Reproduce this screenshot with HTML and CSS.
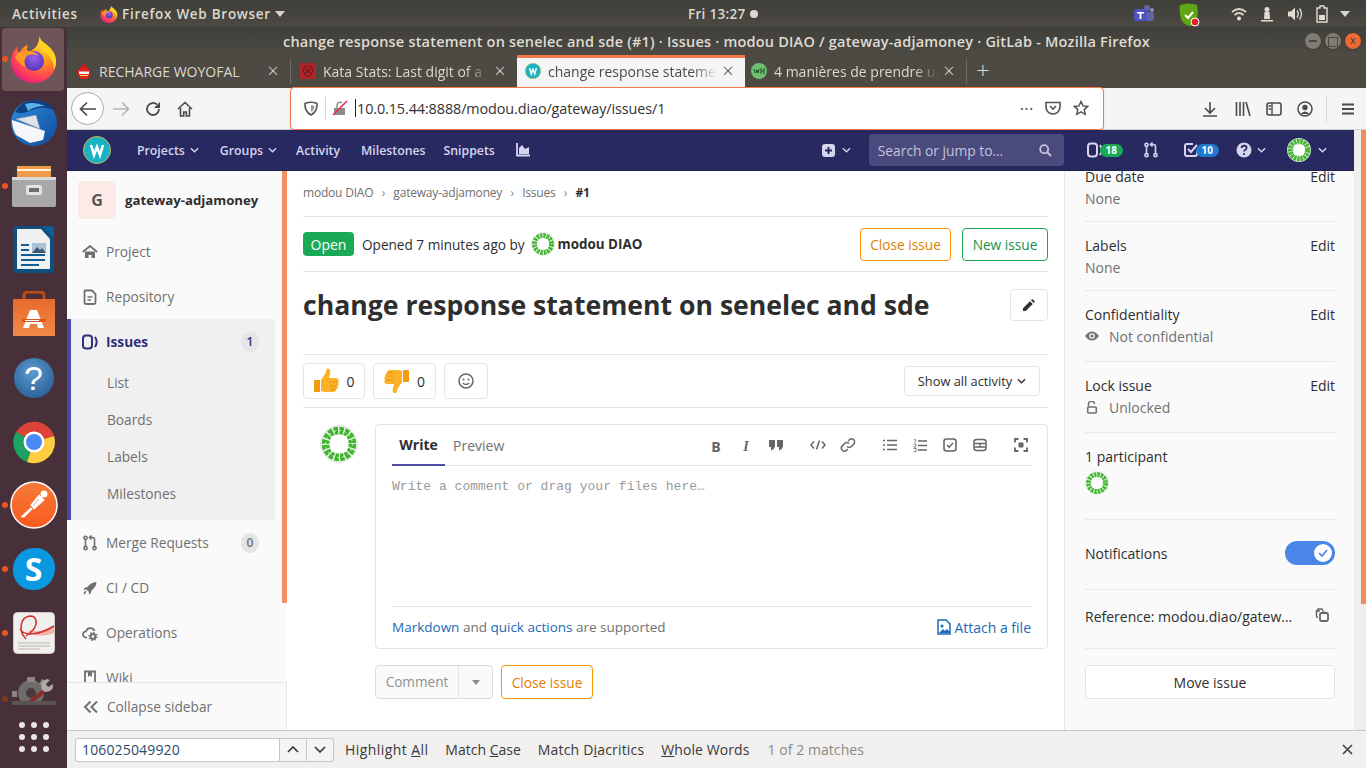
FILE: index.html
```html
<!DOCTYPE html>
<html lang="en">
<head>
<meta charset="utf-8">
<title>change response statement on senelec and sde (#1)</title>
<link rel="stylesheet" href="styles.css">
</head>
<body>
<svg class="defs" width="0" height="0" aria-hidden="true">
  <defs>
    <radialGradient id="ffBase" cx="0.72" cy="0.15" r="1">
      <stop offset="0" stop-color="#ffe226"/><stop offset="0.45" stop-color="#ff8a1f"/><stop offset="0.75" stop-color="#ff3d5a"/><stop offset="1" stop-color="#d5148f"/>
    </radialGradient>
    <radialGradient id="ffCore" cx="0.5" cy="0.35" r="0.7">
      <stop offset="0" stop-color="#9c5ff0"/><stop offset="1" stop-color="#4a34b4"/>
    </radialGradient>
    <linearGradient id="tbBlue" x1="0" y1="0" x2="1" y2="1">
      <stop offset="0" stop-color="#2a8fe0"/><stop offset="1" stop-color="#114a9c"/>
    </linearGradient>
    <linearGradient id="bagG" x1="0" y1="0" x2="0" y2="1">
      <stop offset="0" stop-color="#e96a2a"/><stop offset="1" stop-color="#f08a48"/>
    </linearGradient>
    <linearGradient id="pmG" x1="0" y1="0" x2="0" y2="1">
      <stop offset="0" stop-color="#f47a3a"/><stop offset="1" stop-color="#fb5a1e"/>
    </linearGradient>
    <symbol id="firefox" viewBox="0 0 48 48">
      <path fill="url(#ffBase)" d="M29 1c1 4 4 6 8 9 6 5 9 10 9 17 0 12-10 21-22 21S1 39 1 27c0-6 2-11 6-15 0 3 1 5 3 6 1-4 4-7 8-8-2 4-1 6 1 7 6-3 11-8 10-16z"/>
      <path fill="#ffd21f" d="M29 1c1 4 4 6 8 9 6 5 9 10 9 17 0 3-1 6-2 8 0-8-4-15-11-19-1-5 0-10-4-15z"/>
      <circle cx="24" cy="26" r="10" fill="url(#ffCore)"/>
      <path fill="#ff9a26" d="M5 22c3-5 8-7 13-6 5 0 9 2 11 5-4-2-9-2-12 0-3 3-3 7-1 11-4-1-8-5-11-10z"/>
    </symbol>
    <symbol id="identicon" viewBox="0 0 38 38">
      <circle cx="19" cy="19" r="18.5" fill="#f2f2f2" stroke="#e4e4e4"/>
      <circle cx="19" cy="19" r="13.5" fill="none" stroke="#3fb52e" stroke-width="7.500" stroke-dasharray="4 1.300"/>
      <circle cx="19" cy="19" r="13.5" fill="none" stroke="#fff" stroke-width="1" stroke-dasharray="1.500 3.800"/>
      <rect x="10.500" y="10.500" width="17" height="17" rx="4" fill="#fff"/>
    </symbol>
    <symbol id="wlogo" viewBox="0 0 28 28">
      <circle cx="14" cy="14" r="13.500" fill="#1ab3c4" stroke="#c8b65a"/>
      <path d="M8 9l3 10 3-8 3 8 3-10" fill="none" stroke="#fff" stroke-width="2.600"/>
    </symbol>
    <symbol id="ic-issues" viewBox="0 0 16 16">
      <rect x="1" y="1.500" width="9" height="13" rx="3" fill="none" stroke="currentColor" stroke-width="2"/>
      <path d="M13 3c2 3 2 7 0 10" fill="none" stroke="currentColor" stroke-width="2"/>
    </symbol>
    <symbol id="ic-mr" viewBox="0 0 16 16">
      <g fill="none" stroke="currentColor" stroke-width="1.600">
        <circle cx="3.500" cy="2.800" r="1.600"/><circle cx="3.500" cy="13.200" r="1.600"/><circle cx="12.500" cy="13.200" r="1.600"/>
        <path d="M3.500 4.500v7M12.500 11.500V4.500c0-1-.6-2-2-2H8M9.500 0.500l-2 2 2 2"/>
      </g>
    </symbol>
    <symbol id="ic-todo" viewBox="0 0 16 16">
      <path d="M14 8v4a2 2 0 0 1-2 2H4a2 2 0 0 1-2-2V4a2 2 0 0 1 2-2h6" fill="none" stroke="currentColor" stroke-width="2"/>
      <path d="M5 7l3 3 6-7" fill="none" stroke="currentColor" stroke-width="2"/>
    </symbol>
    <symbol id="ic-chev" viewBox="0 0 10 6">
      <path d="M1 1l4 4 4-4" fill="none" stroke="currentColor" stroke-width="1.500"/>
    </symbol>
    <symbol id="identicon-nav" viewBox="0 0 38 38">
      <circle cx="19" cy="19" r="19" fill="#eaeaea"/>
      <circle cx="19" cy="19" r="14" fill="none" stroke="#43b52f" stroke-width="8" stroke-dasharray="4 1.200"/>
      <rect x="11" y="11" width="16" height="16" rx="2" fill="#fff"/>
    </symbol>
    <symbol id="thumb" viewBox="0 0 26 26">
      <path d="M2 12h5v12H2a1 1 0 0 1-1-1V13a1 1 0 0 1 1-1z" fill="#f39b0b"/>
      <path d="M8 12l4-6c1-2 1-4 2-5 3-1 4 2 3 5l-1 4h7c3 0 3 3 2 4 1 1 1 3-.5 4 .5 1.500 0 3-1.500 3.500 0 1.500-1 2.500-3 2.500H12c-2 0-3-1-4-1z" fill="#fcb127"/>
      <path d="M17 14h7M17 18h6.500M17 21.500h5" stroke="#e8930a" stroke-width="1"/>
    </symbol>
  </defs>
</svg>

<header class="topbar">
  <div class="tb-left">
    <span class="tb-activities">Activities</span>
    <svg class="tb-ff" width="18" height="18"><use href="#firefox"/></svg>
    <span class="tb-app">Firefox Web Browser</span>
    <span class="caret"></span>
  </div>
  <div class="tb-center"><span>Fri 13:27</span><span class="tb-dot"></span></div>
  <div class="tb-right">
    <svg class="tray tray-teams" width="22" height="20" viewBox="0 0 22 20"><circle cx="14" cy="4" r="3" fill="#6264a7"/><circle cx="19" cy="6" r="2" fill="#8b8cc7"/><rect x="12" y="8" width="9" height="9" rx="3" fill="#6264a7"/><rect x="1" y="5" width="13" height="12" rx="1.500" fill="#4b53bc"/><path d="M4 8h7v1.500H8.400V15H6.600V9.500H4z" fill="#fff"/></svg>
    <svg class="tray tray-shield" width="22" height="24" viewBox="0 0 22 24"><path d="M2 2q9-3 17 0 2 10-1 17-3 4-7 4-6-2-8-7-2-7-1-14z" fill="#5fa616"/><path d="M7 12l3 3 5-6" fill="none" stroke="#fff" stroke-width="2"/><circle cx="17" cy="19" r="4" fill="#e8202a" stroke="#fff"/></svg>
    <svg class="tray tray-wifi" width="16" height="14" viewBox="0 0 16 14"><path d="M1 5q7-6 14 0M3.500 8q4.500-4 9 0" fill="none" stroke="#d8d5cc" stroke-width="1.700"/><circle cx="8" cy="11.500" r="2" fill="#e8e5dc"/></svg>
    <svg class="tray tray-lock" width="14" height="16" viewBox="0 0 14 16"><circle cx="7" cy="3.500" r="2.500" fill="#e0ddd4"/><path d="M4.500 6h5l.5 7H4zM1 14h12v1.500H1z" fill="#e0ddd4"/></svg>
    <svg class="tray tray-vol" width="16" height="14" viewBox="0 0 16 14"><path d="M1 4.500h3l4-4v13l-4-4H1z" fill="#e0ddd4"/><path d="M10 3.500q2.500 3.500 0 7M12.500 1.500q4 5.500 0 11" fill="none" stroke="#d8d5cc" stroke-width="1.400"/></svg>
    <svg class="tray tray-bat" width="12" height="18" viewBox="0 0 12 18"><path d="M4 1h4v2h3v14H1V3h3z" fill="none" stroke="#e0ddd4" stroke-width="1.400"/><path d="M3 10h6v5H3z" fill="#e0ddd4"/></svg>
    <span class="caret tray-caret"></span>
  </div>
</header>

<div class="desktop">
  <nav class="dock">
    <div class="dock-item dock-active"><span class="dot"></span>
      <svg width="48" height="48"><use href="#firefox"/></svg></div>
    <div class="dock-item">
      <svg width="50" height="50" viewBox="0 0 50 50"><circle cx="25" cy="25" r="23" fill="url(#tbBlue)"/><path d="M6 14Q14 0 30 2q10 2 15 10-12-5-22 0-9 5-17 2z" fill="#10407f"/><path d="M16 6q10-3 20 2-10 0-17 5z" fill="#5ab0ec"/><path d="M3 22l33 11-2 9-13 3-14-8q-4-7-4-15z" fill="#f6f6fa"/><path d="M7 21l20-4 4 14z" fill="#e0e3ea" stroke="#8c96a8" stroke-width=".7"/></svg></div>
    <div class="dock-item"><span class="dot"></span>
      <svg width="44" height="44" viewBox="0 0 44 44"><path d="M2 0h40v14H2z" fill="#3f3a36"/><path d="M5 2h34v12H5z" fill="#ef9a4a"/><path d="M5 5h34v2H5z" fill="#fff3d8"/><path d="M0 13h44v28a2 2 0 0 1-2 2H2a2 2 0 0 1-2-2z" fill="#a8a8a8"/><path d="M0 13h44v3H0z" fill="#d8d8d8"/><rect x="14" y="21" width="16" height="10" rx="2" fill="#e2e2e2"/><rect x="17" y="24" width="10" height="4" fill="#6c6c6c"/></svg></div>
    <div class="dock-item">
      <svg width="42" height="50" viewBox="0 0 42 50"><path d="M3 1h26l12 12v32a3 3 0 0 1-3 3H3a3 3 0 0 1-3-3V4a3 3 0 0 1 3-3z" fill="#0e4f7e"/><path d="M4 4h24l9 10v30H4z" fill="#eef0f2"/><path d="M29 1h9a3 3 0 0 1 3 3v9z" fill="#0e5f96"/><path d="M8 19h8v2H8zM8 24h8v2H8zM8 29h24v2H8zM8 34h24v2H8zM8 39h18v2H8z" fill="#0e5f96"/><rect x="19" y="18" width="14" height="10" fill="#a9c2d8"/><path d="M19 28l5-6 3 3 2-2 4 5z" fill="#44576a"/></svg></div>
    <div class="dock-item">
      <svg width="44" height="46" viewBox="0 0 44 46"><path d="M12 10V5q0-4 4-4h12q4 0 4 4v5" fill="none" stroke="#bd4a12" stroke-width="3"/><path d="M1 8h42v37H1z" fill="url(#bagG)"/><path d="M18 19h7l7 18h-6l-1-4h-7l-1 4h-6z" fill="#fff"/><path d="M10 28h24v3H10z" fill="#e2561c"/><path d="M13 29h14v1H13z" fill="#fff"/></svg></div>
    <div class="dock-item">
      <div class="help-ball">?</div></div>
    <div class="dock-item">
      <svg width="46" height="46" viewBox="0 0 46 46"><path d="M23 23 5 13A21 21 0 0 1 43 17z" fill="#dc4437"/><path d="M23 23 5 13a21 21 0 0 0 11 30z" fill="#1ea362"/><path d="M23 23 16 43A21 21 0 0 0 43 17z" fill="#ffcd40"/><circle cx="23" cy="23" r="10.500" fill="#fff"/><circle cx="23" cy="23" r="8" fill="#4a8af4"/></svg></div>
    <div class="dock-item"><span class="dot"></span>
      <svg width="48" height="48" viewBox="0 0 48 48"><circle cx="24" cy="24" r="23" fill="url(#pmG)" stroke="#fff" stroke-width="1.500"/><path d="M10 36l11-10 2 2-9 9zM20 24l9-11 6 6-11 10zM29 18l-6 7" fill="#fff" stroke="#f0652a" stroke-width=".6"/><circle cx="34" cy="13" r="3.500" fill="#fff"/></svg></div>
    <div class="dock-item"><span class="dot"></span>
      <div class="skype"><span>S</span></div></div>
    <div class="dock-item"><span class="dot"></span>
      <svg width="42" height="42" viewBox="0 0 42 42"><rect x=".5" y=".5" width="41" height="41" rx="4" fill="#f1efec" stroke="#cfcac4"/><path d="M15 18q10 4 26-4v7q-14 5-24 0z" fill="#efb1a8"/><path d="M13 27C5 19 7 5 17 4c7 0 8 8 3 14-2 2-4 4-7 6M7 17c4 7 18 7 34-3" fill="none" stroke="#d42b2b" stroke-width="1.500"/><path d="M5 31h32M5 34h32M5 37h22" stroke="#b8b8b8"/></svg></div>
    <div class="dock-item dock-tools"><span class="dot dot-dim"></span>
      <svg width="44" height="28" viewBox="0 0 44 28"><circle cx="19" cy="16" r="13" fill="#6f6b69"/><circle cx="19" cy="16" r="5" fill="#4a3a40"/><path d="M15 0h8v5h-8zM0 14h5v6H0zM30 2l5 3-4 5-4-3z" fill="#8a8684"/><path d="M11 28l20-16 3 3-16 13z" fill="#8a2a2a"/><path d="M30 13q-3-9 5-11l3 1-4 4 2 3 5-3q1 8-8 8z" fill="#aeaaa8"/><path d="M0 24h44v4H0z" fill="#5a5355"/></svg></div>
    <div class="dock-item dock-grid">
      <span></span><span></span><span></span><span></span><span></span><span></span><span></span><span></span><span></span>
    </div>
  </nav>

  <div class="window">
    <div class="titlebar">
      <div class="tt-spacer"></div>
      <div class="tt-text">change response statement on senelec and sde (#1) · Issues · modou DIAO / gateway-adjamoney · GitLab - Mozilla Firefox</div>
      <div class="wm-buttons">
        <span class="wm wm-min"></span><span class="wm wm-max"></span><span class="wm wm-close">x</span>
      </div>
    </div>

    <div class="tabstrip">
      <div class="tab tab-1">
        <svg class="fav" width="16" height="16" viewBox="0 0 16 16"><circle cx="8" cy="10" r="6.500" fill="#e0201c"/><path d="M6 1.500h4l1 4H5z" fill="#d01a18"/><path d="M3 8.500h10v2.500H3z" fill="#fff"/><path d="M4 12.500h8" stroke="#ffd84a"/></svg>
        <span class="tab-label">RECHARGE WOYOFAL</span><span class="tab-x">×</span>
      </div>
      <div class="tab-sep"></div>
      <div class="tab tab-2">
        <svg class="fav" width="16" height="16" viewBox="0 0 16 16"><rect width="16" height="16" fill="#b1242a"/><path d="M5 3h6l2 5-3 5H6L3 8zM6 6l4 4M10 6l-4 4" fill="none" stroke="#6e1a1d" stroke-width="1.200"/></svg>
        <span class="tab-label tab-fade">Kata Stats: Last digit of a</span><span class="tab-x">×</span>
      </div>
      <div class="tab tab-active">
        <svg class="fav" width="16" height="16"><use href="#wlogo"/></svg>
        <span class="tab-label tab-fade">change response stateme</span><span class="tab-x">×</span>
      </div>
      <div class="tab tab-4">
        <svg class="fav" width="16" height="16" viewBox="0 0 16 16"><circle cx="8" cy="8" r="8" fill="#6fbf73"/><path d="M3 6l1.500 4L6 7l1 3 1-4M10 5v6M13 5v6M10 8h3" fill="none" stroke="#1f4a22" stroke-width="1"/></svg>
        <span class="tab-label tab-fade">4 manières de prendre ur</span><span class="tab-x">×</span>
      </div>
      <div class="tab-sep"></div>
      <span class="tab-plus">+</span>
    </div>

    <div class="toolbar">
      <div class="back-btn">
        <svg width="18" height="16" viewBox="0 0 18 16"><path d="M17 8H2M8 1.500 1.500 8 8 14.500" fill="none" stroke="#4a4a4a" stroke-width="1.700"/></svg>
      </div>
      <svg class="tool-fwd" width="18" height="16" viewBox="0 0 18 16"><path d="M1 8h15M10 1.500 16.500 8 10 14.500" fill="none" stroke="#b5b5b5" stroke-width="1.700"/></svg>
      <svg class="tool-reload" width="16" height="16" viewBox="0 0 16 16"><path d="M14 8a6 6 0 1 1-2-4.500" fill="none" stroke="#4a4a4a" stroke-width="1.800"/><path d="M15 1v6H9z" fill="#4a4a4a"/></svg>
      <svg class="tool-home" width="16" height="16" viewBox="0 0 16 16"><path d="M1 8l7-6.500L15 8M3.500 7v8h3.200v-4h2.600v4h3.200V7" fill="none" stroke="#4a4a4a" stroke-width="1.600"/></svg>
      <div class="urlbar">
        <svg class="u-shield" width="14" height="15" viewBox="0 0 14 15"><path d="M1 2.500q6-2.500 12 0 .5 8-6 11.500-6.500-3.500-6-11.500z" fill="none" stroke="#555" stroke-width="1.600"/><path d="M7 4v7q3.500-2 3.500-6z" fill="#999"/></svg>
        <span class="u-sep"></span>
        <svg class="u-lock" width="16" height="16" viewBox="0 0 16 16"><path d="M2 8h11v7H2z" fill="#8c8c8c"/><path d="M5 8V5a3 3 0 0 1 5-2" fill="none" stroke="#8c8c8c" stroke-width="1.500"/><path d="M1 15 15 1" stroke="#ea2a4f" stroke-width="1.600"/></svg>
        <span class="u-caret"></span>
        <span class="u-text">10.0.15.44:8888/modou.diao/gateway/issues/1</span>
        <span class="u-dots">•••</span>
        <svg class="u-pocket" width="16" height="16" viewBox="0 0 16 16"><path d="M1 2.500h14V7a7 7 0 0 1-14 0z" fill="none" stroke="#555" stroke-width="1.600"/><path d="M5 6l3 3 3-3" fill="none" stroke="#555" stroke-width="1.600"/></svg>
        <svg class="u-star" width="16" height="16" viewBox="0 0 16 16"><path d="M8 1.500l2 4.400 4.700.5-3.500 3.200 1 4.700L8 11.900l-4.200 2.400 1-4.700L1.300 6.400 6 5.900z" fill="none" stroke="#555" stroke-width="1.500"/></svg>
      </div>
      <svg class="t-dl" width="16" height="16" viewBox="0 0 16 16"><path d="M8 1v10M3 7l5 5 5-5M1 15h14" fill="none" stroke="#4a4a4a" stroke-width="1.600"/></svg>
      <svg class="t-lib" width="16" height="16" viewBox="0 0 16 16"><path d="M1.500 1v14M5 1v14M8.500 1v14M11 1l4 14" fill="none" stroke="#4a4a4a" stroke-width="1.600"/></svg>
      <svg class="t-side" width="16" height="16" viewBox="0 0 16 16"><rect x="1" y="2" width="14" height="12" rx="2" fill="none" stroke="#4a4a4a" stroke-width="1.600"/><path d="M6 2v12M2.500 5H5M2.500 8H5" stroke="#4a4a4a" stroke-width="1.400"/></svg>
      <svg class="t-acct" width="16" height="16" viewBox="0 0 16 16"><circle cx="8" cy="8" r="7" fill="none" stroke="#4a4a4a" stroke-width="1.500"/><circle cx="8" cy="6.500" r="2.700" fill="#4a4a4a"/><path d="M3.500 13q4.500-5 9 0" fill="#4a4a4a"/></svg>
      <span class="t-sep"></span>
      <svg class="t-menu" width="14" height="12" viewBox="0 0 14 12"><path d="M1 1.500h12M1 6h12M1 10.500h12" stroke="#4a4a4a" stroke-width="1.800"/></svg>
    </div>

    <div class="viewport">
      <div class="page">
        <div class="gl-nav">
          <svg class="gl-logo" width="28" height="28"><use href="#wlogo"/></svg>
          <span class="gl-link gl-projects">Projects<svg class="chev" width="9" height="6"><use href="#ic-chev"/></svg></span>
          <span class="gl-link gl-groups">Groups<svg class="chev" width="9" height="6"><use href="#ic-chev"/></svg></span>
          <span class="gl-link gl-activity">Activity</span>
          <span class="gl-link gl-miles">Milestones</span>
          <span class="gl-link gl-snip">Snippets</span>
          <svg class="gl-chart" width="14" height="14" viewBox="0 0 14 14"><path d="M1 0v12.500h13" fill="none" stroke="#d5d5ef" stroke-width="1.800"/><path d="M3 11V5l3-3 3 4 4-2v7z" fill="#d5d5ef"/></svg>
          <svg class="gl-plus" width="13" height="13" viewBox="0 0 13 13"><rect width="13" height="13" rx="3" fill="#d5d5ef"/><path d="M6.500 3v7M3 6.500h7" stroke="#292961" stroke-width="2"/></svg>
          <svg class="chev gl-plus-chev" width="9" height="6"><use href="#ic-chev"/></svg>
          <div class="gl-search"><span>Search or jump to…</span>
            <svg width="13" height="13" viewBox="0 0 13 13"><circle cx="5.200" cy="5.200" r="4" fill="none" stroke="#c3c3de" stroke-width="1.800"/><path d="M8 8l4 4" stroke="#c3c3de" stroke-width="2"/></svg></div>
          <span class="gl-count gl-count-issues"><svg width="16" height="16"><use href="#ic-issues"/></svg><b class="badge badge-green">18</b></span>
          <svg class="gl-mr" width="16" height="16"><use href="#ic-mr"/></svg>
          <span class="gl-count gl-count-todo"><svg width="16" height="16"><use href="#ic-todo"/></svg><b class="badge badge-blue">10</b></span>
          <svg class="gl-help" width="16" height="16" viewBox="0 0 16 16"><circle cx="8" cy="8" r="7.500" fill="#d5d5ef"/><path d="M5.500 6q.3-2.300 2.700-2.300 2.500.2 2.400 2.300-.1 1.300-1.500 2-1 .5-1 1.500" fill="none" stroke="#292961" stroke-width="1.800"/><circle cx="8.100" cy="12" r="1.100" fill="#292961"/></svg>
          <svg class="chev gl-help-chev" width="9" height="6"><use href="#ic-chev"/></svg>
          <svg class="gl-avatar" width="24" height="24"><use href="#identicon-nav"/></svg>
          <svg class="chev gl-av-chev" width="9" height="6"><use href="#ic-chev"/></svg>
        </div>

        <div class="gl-body">
          <aside class="side">
            <div class="side-scroll">
              <div class="side-list">
                <div class="side-head"><span class="side-g">G</span><span class="side-name">gateway-adjamoney</span></div>
                <div class="side-item">
                  <svg width="16" height="16" viewBox="0 0 16 16"><path d="M.8 8 8 2l7.200 6" fill="none" stroke="currentColor" stroke-width="1.800"/><path d="M3 7.500h10V14H9.500v-3h-3v3H3z" fill="currentColor"/></svg>
                  <span>Project</span></div>
                <div class="side-item">
                  <svg width="16" height="16" viewBox="0 0 16 16"><path d="M3 1.500h7l3.500 3.500v8.500a1.500 1.500 0 0 1-1.500 1.500H4a1.500 1.500 0 0 1-1.500-1.500V2z" fill="none" stroke="currentColor" stroke-width="1.800"/><path d="M5.500 8h5M5.500 11h3.500" stroke="currentColor" stroke-width="1.600"/></svg>
                  <span>Repository</span></div>
                <div class="side-group">
                  <div class="side-item side-current">
                    <svg width="16" height="16"><use href="#ic-issues"/></svg>
                    <span>Issues</span><b class="side-badge">1</b></div>
                  <div class="side-sub">List</div>
                  <div class="side-sub">Boards</div>
                  <div class="side-sub">Labels</div>
                  <div class="side-sub">Milestones</div>
                </div>
                <div class="side-item">
                  <svg width="16" height="16"><use href="#ic-mr"/></svg>
                  <span>Merge Requests</span><b class="side-badge">0</b></div>
                <div class="side-item">
                  <svg width="16" height="16" viewBox="0 0 16 16"><path d="M14.500 2q-6 .5-9 5L3 7.500 1.500 10l3-.5L7 12l-.5 2.500L9 13l.5-2.500q4.500-3 5-8.500z" fill="currentColor"/><path d="M2 14l2-3" stroke="currentColor" stroke-width="1.500"/></svg>
                  <span>CI / CD</span></div>
                <div class="side-item">
                  <svg width="16" height="16" viewBox="0 0 16 16"><path d="M5 12.500H4A3 3 0 0 1 4 6.500 4.500 4.500 0 0 1 12.500 6" fill="none" stroke="currentColor" stroke-width="1.700"/><circle cx="11" cy="11.500" r="2.400" fill="none" stroke="currentColor" stroke-width="2"/><circle cx="11" cy="11.500" r="4" fill="none" stroke="currentColor" stroke-width="1.300" stroke-dasharray="1.500 1.600"/></svg>
                  <span>Operations</span></div>
                <div class="side-item">
                  <svg width="16" height="16" viewBox="0 0 16 16"><path d="M3 1.500h10V15H3z" fill="none" stroke="currentColor" stroke-width="1.800"/><path d="M6 1.500V7l2-1.500L10 7V1.500z" fill="currentColor"/></svg>
                  <span>Wiki</span></div>
              </div>
              <div class="side-track"><div class="side-thumb"></div></div>
            </div>
            <div class="side-collapse">
              <svg width="16" height="14" viewBox="0 0 16 14"><path d="M7.500 1.500 2 7l5.500 5.500M14 1.500 8.500 7l5.500 5.500" fill="none" stroke="currentColor" stroke-width="2"/></svg>
              <span>Collapse sidebar</span>
            </div>
          </aside>

          <main class="content">
            <div class="crumbs">
              <span>modou DIAO</span><i class="sepch">›</i>
              <span>gateway-adjamoney</span><i class="sepch">›</i>
              <span>Issues</span><i class="sepch">›</i>
              <b>#1</b>
            </div>
            <div class="status-row">
              <span class="open-badge">Open</span>
              <span class="opened">Opened 7 minutes ago by</span>
              <svg class="status-av" width="24" height="24"><use href="#identicon"/></svg>
              <b class="author">modou DIAO</b>
              <span class="btn btn-warn btn-close-top">Close issue</span>
              <span class="btn btn-ok">New issue</span>
            </div>
            <div class="title-row">
              <h1>change response statement on senelec and sde</h1>
              <span class="btn btn-edit"><svg width="12" height="12" viewBox="0 0 12 12"><path d="M0 12V9.200L7 2.200 9.800 5 2.800 12zM8 1.200 9 .2q.3-.2.6 0l2.200 2.200q.2.3 0 .6l-1 1z" fill="#303030"/></svg></span>
            </div>
            <div class="award-row">
              <span class="award award-up"><svg width="26" height="26"><use href="#thumb"/></svg><span>0</span></span>
              <span class="award award-down"><svg class="flip" width="26" height="26"><use href="#thumb"/></svg><span>0</span></span>
              <span class="award award-smile"><svg width="16" height="16" viewBox="0 0 16 16"><circle cx="8" cy="8" r="7" fill="none" stroke="#666" stroke-width="1.500"/><circle cx="5.500" cy="6.500" r="1" fill="#666"/><circle cx="10.500" cy="6.500" r="1" fill="#666"/><path d="M4.800 10q3.200 2.800 6.400 0" fill="none" stroke="#666" stroke-width="1.300"/></svg></span>
              <span class="activity-btn">Show all activity<svg class="chev" width="9" height="6"><use href="#ic-chev"/></svg></span>
            </div>
            <div class="comment-row">
              <svg class="comment-av" width="38" height="38"><use href="#identicon"/></svg>
              <div class="comment-col">
                <div class="card">
                  <div class="card-head">
                    <span class="tab-write">Write</span><span class="tab-preview">Preview</span>
                    <div class="md-tools">
                      <div class="md-group">
                        <span class="md md-b">B</span><span class="md md-i">I</span>
                        <svg width="16" height="12" viewBox="0 0 16 12"><path d="M1 1h6v6q-.5 3.500-4 4.500V8H1zM9 1h6v6q-.5 3.500-4 4.500V8H9z" fill="#666"/></svg>
                      </div>
                      <div class="md-group">
                        <svg width="16" height="10" viewBox="0 0 16 10"><path d="M4 1.500 1 5l3 3.500M12 1.500 15 5l-3 3.500M9.500 .5l-3 9" fill="none" stroke="#666" stroke-width="1.500"/></svg>
                        <svg width="16" height="16" viewBox="0 0 16 16"><path d="M7 9.500a3 3 0 0 0 4.300 0l2.400-2.400a3 3 0 0 0-4.300-4.300L8.200 4M9 6.500a3 3 0 0 0-4.300 0L2.300 8.900a3 3 0 0 0 4.300 4.300L7.800 12" fill="none" stroke="#666" stroke-width="1.500"/></svg>
                      </div>
                      <div class="md-group">
                        <svg width="14" height="12" viewBox="0 0 14 12"><path d="M4 1.500h10M4 6h10M4 10.500h10" stroke="#666" stroke-width="1.400"/><path d="M0 1.500h2M0 6h2M0 10.500h2" stroke="#666" stroke-width="1.600"/></svg>
                        <svg class="md-ol" width="14" height="13" viewBox="0 0 14 13"><path d="M5 2h9M5 6.500h9M5 11h9" stroke="#666" stroke-width="1.400"/><path d="M1 .5h1.300v3M.5 5h2.500v1.500L.8 8h2.400M.6 9.500h2.500v3H.6" fill="none" stroke="#666" stroke-width=".8"/></svg>
                        <svg width="14" height="14" viewBox="0 0 14 14"><rect x="1" y="1" width="12" height="12" rx="2.500" fill="none" stroke="#666" stroke-width="1.600"/><path d="M4 7l2.200 2.200L10 5" fill="none" stroke="#666" stroke-width="1.500"/></svg>
                        <svg width="14" height="14" viewBox="0 0 14 14"><rect x="1" y="1.500" width="12" height="11" rx="2.500" fill="none" stroke="#666" stroke-width="1.500"/><path d="M1.500 5.500h11M1.500 9h11M7 5.500V9" stroke="#666" stroke-width="1.300"/></svg>
                      </div>
                      <svg class="md-full" width="14" height="14" viewBox="0 0 14 14"><path d="M1 4.500V1h3.500M9.500 1H13v3.500M13 9.500V13H9.500M4.500 13H1V9.500" fill="none" stroke="#666" stroke-width="1.800"/><rect x="4.500" y="4.500" width="5" height="5" rx="1" fill="#666"/></svg>
                    </div>
                  </div>
                  <div class="card-body">Write a comment or drag your files here…</div>
                  <div class="card-foot">
                    <span class="foot-left"><a>Markdown</a> and <a>quick actions</a> are supported</span>
                    <a class="attach"><svg width="14" height="16" viewBox="0 0 14 16"><path d="M1 1h8l4 4v10H1z" fill="none" stroke="#1b69b6" stroke-width="1.500"/><circle cx="5" cy="7" r="1.500" fill="#1b69b6"/><path d="M2 14l4-4 2 2 2-2 3 3v1z" fill="#1b69b6"/></svg>Attach a file</a>
                  </div>
                </div>
                <div class="comment-actions">
                  <span class="split"><span class="split-main">Comment</span><span class="split-drop"><span class="mini-caret"></span></span></span>
                  <span class="btn btn-warn btn-close-bottom">Close issue</span>
                </div>
              </div>
            </div>
          </main>

          <aside class="right">
            <section class="r-sec r-due"><div class="r-line"><span>Due date</span><span>Edit</span></div><div class="r-val">None</div></section>
            <section class="r-sec"><div class="r-line"><span>Labels</span><span>Edit</span></div><div class="r-val">None</div></section>
            <section class="r-sec r-tall"><div class="r-line"><span>Confidentiality</span><span>Edit</span></div>
              <div class="r-val r-ic"><svg width="14" height="10" viewBox="0 0 14 10"><path d="M0 5q7-9 14 0-7 9-14 0z" fill="#707070"/><circle cx="7" cy="5" r="2.800" fill="#fafafa"/><circle cx="7" cy="5" r="1.500" fill="#707070"/></svg>Not confidential</div></section>
            <section class="r-sec r-tall"><div class="r-line"><span>Lock issue</span><span>Edit</span></div>
              <div class="r-val r-ic"><svg width="14" height="13" viewBox="0 0 14 13"><path d="M3.500 5.500V3.500a3 3 0 0 1 6-.5" fill="none" stroke="#707070" stroke-width="1.500"/><rect x="2.700" y="6" width="8.600" height="6" rx="1" fill="none" stroke="#707070" stroke-width="1.600"/></svg>Unlocked</div></section>
            <section class="r-sec r-part"><div class="r-line"><span>1 participant</span></div>
              <svg class="r-av" width="24" height="24"><use href="#identicon"/></svg></section>
            <section class="r-sec r-notif"><span>Notifications</span>
              <span class="toggle"><span class="knob"><svg width="10" height="8" viewBox="0 0 10 8"><path d="M1 4l3 3 5-6" fill="none" stroke="#4a86e8" stroke-width="1.700"/></svg></span></span></section>
            <section class="r-sec r-ref"><span>Reference: modou.diao/gatew…</span>
              <svg width="14" height="14" viewBox="0 0 14 14"><path d="M5 3H3a1.500 1.500 0 0 1 0-2h4l1 2M1.500 2v6a1.500 1.500 0 0 0 1.500 1.500" fill="none" stroke="#666" stroke-width="1.500"/><rect x="5" y="5" width="8" height="8" rx="1.500" fill="none" stroke="#666" stroke-width="1.800"/><path d="M7 4h3l3 3" fill="none" stroke="#666" stroke-width="1"/></svg></section>
            <div class="move-btn">Move issue</div>
          </aside>
        </div>
      </div>
      <div class="page-track"><div class="page-thumb"></div></div>
    </div>

    <div class="findbar">
      <div class="find-input">106025049920</div>
      <span class="find-btn"><svg width="12" height="7" viewBox="0 0 12 7"><path d="M1 6l5-5 5 5" fill="none" stroke="#3a3a3a" stroke-width="1.700"/></svg></span>
      <span class="find-btn find-btn-2"><svg width="12" height="7" viewBox="0 0 12 7"><path d="M1 1l5 5 5-5" fill="none" stroke="#3a3a3a" stroke-width="1.700"/></svg></span>
      <span class="find-opt find-hl">Highlight <u>A</u>ll</span>
      <span class="find-opt find-case">Match <u>C</u>ase</span>
      <span class="find-opt find-dia">Match D<u>i</u>acritics</span>
      <span class="find-opt find-word"><u>W</u>hole Words</span>
      <span class="find-count">1 of 2 matches</span>
      <svg class="find-x" width="11" height="11" viewBox="0 0 11 11"><path d="M1 1l9 9M10 1l-9 9" stroke="#3a3a3a" stroke-width="1.500"/></svg>
    </div>
  </div>
</div>
</body>
</html>
```

FILE: styles.css
```css
* { box-sizing: border-box; }
html, body { margin: 0; padding: 0; }
body {
  width: 1366px;
  height: 768px;
  overflow: hidden;
  font-family: "Open Sans", "Noto Sans", "Liberation Sans", sans-serif;
  font-size: 14px;
  color: #2e2e2e;
  background: #fff;
}
svg { flex: none; display: block; }
.defs { position: absolute; }

/* top bar */
.topbar {
  height: 27px;
  display: flex;
  align-items: center;
  background: linear-gradient(#3f3e39, #4b4942);
  color: #dcd9d0;
  font-size: 13.5px;
  font-weight: 600;
}
.tb-left { width: 688px; display: flex; align-items: center; padding-left: 12px; }
.tb-activities { width: 88px; letter-spacing: .65px; }
.tb-ff { margin-right: 4px; }
.tb-app { letter-spacing: .72px; white-space: nowrap; }
.caret { width: 0; height: 0; border: 5px solid transparent; border-top: 6px solid #d8d5cc; border-bottom: 0; margin-left: 4px; }
.tb-center { display: flex; align-items: center; gap: 5px; font-size: 13.4px; letter-spacing: .33px; }
.tb-dot { width: 8px; height: 8px; border-radius: 50%; background: #dcd9d0; }
.tb-right { flex: 1; display: flex; align-items: center; }
.tray-teams { margin-left: 375px; }
.tray-shield { margin-left: 23px; margin-top: 3px; }
.tray-wifi { margin-left: 31px; }
.tray-lock { margin-left: 13px; }
.tray-vol { margin-left: 13px; }
.tray-bat { margin-left: 13px; }
.tray-caret { margin-left: 12px; }

/* dock */
.desktop { display: flex; height: 741px; }
.dock { width: 67px; flex: none; background: #47303a; display: flex; flex-direction: column; overflow: hidden; }
.dock-item { position: relative; height: 63.8px; flex: none; display: flex; align-items: center; justify-content: center; }
.dock-active::before { content: ""; position: absolute; left: 2px; right: 3px; top: 1px; bottom: 0; border-radius: 4px; background: #6d5558; }
.dock-active svg { position: relative; }
.dot { position: absolute; left: 2px; top: 50%; width: 6px; height: 6px; margin-top: -3px; border-radius: 50%; background: #e95420; z-index: 1; }
.dot-dim { background: #7c3a22; margin-top: 5px; }
.help-ball { width: 40px; height: 40px; border-radius: 50%; background: radial-gradient(circle at 45% 35%, #5b9bd0, #1f5288); color: #fff; font: 400 34px/40px "Liberation Sans", sans-serif; text-align: center; }
.skype { width: 42px; height: 42px; border-radius: 50% 46% 50% 46%; background: #0a98e0; color: #fff; font: 700 32px/42px "Open Sans", sans-serif; text-align: center; }
.dock-tools { height: 52px; }
.dock-grid { height: 40px; display: grid; grid-template-columns: repeat(3, 6px); gap: 6px; justify-content: center; align-content: center; }
.dock-grid span { width: 6px; height: 6px; border-radius: 50%; background: #e8e4e4; }

/* window */
.window { flex: 1; min-width: 0; display: flex; flex-direction: column; }
.titlebar { height: 28px; flex: none; display: flex; align-items: center; background: linear-gradient(#403f3a, #4c4a43); }
.tt-spacer { width: 64px; }
.tt-text { flex: 1; text-align: center; color: #dfdbd2; font-size: 14.5px; letter-spacing: .2px; font-weight: 600; white-space: nowrap; }
.wm-buttons { width: 64px; display: flex; gap: 2px; padding-left: 2px; }
.wm { width: 18px; height: 18px; border-radius: 50%; background: #7f7c74; border: 1px solid #3b3a36; color: #403f3a; font-size: 11px; line-height: 14px; text-align: center; position: relative; }
.wm-min::after { content: ""; display: block; width: 8px; height: 2px; background: #4a4842; margin: 7px auto 0; }
.wm-max::after { content: ""; display: block; width: 8px; height: 8px; border: 1px solid #4a4842; margin: 4px auto 0; }
.wm-close { background: #ed6a32; }

.tabstrip { height: 33px; flex: none; display: flex; align-items: stretch; background: #4c4a43; color: #dcd9d0; font-size: 14px; }
.tab { display: flex; align-items: center; white-space: nowrap; overflow: hidden; padding-bottom: 1px; }
.fav { margin-right: 7px; }
.tab-label { overflow: hidden; flex: 1; }
.tab-x { width: 20px; text-align: center; font-size: 20px; line-height: 20px; font-weight: 300; flex: none; }
.tab-1 { width: 223px; padding-left: 9px; padding-right: 7px; }
.tab-2 { width: 226px; padding-left: 9px; padding-right: 7px; margin-left: 0; }
.tab-active { width: 228px; padding: 0 7px 4px 8px; margin-top: 0; background: #f5f5f5; color: #4a4a4a; border-top: 3px solid #f2784b; }
.tab-4 { width: 221px; padding-left: 6px; padding-right: 7px; }
.tab-sep { width: 1px; margin: 4px 0; background: #6f6c64; flex: none; }
.tab-fade { -webkit-mask-image: linear-gradient(90deg, #000 85%, transparent); mask-image: linear-gradient(90deg, #000 85%, transparent); }
.tab-plus { font-size: 24px; line-height: 30px; margin-left: 9px; font-weight: 300; }

.toolbar { height: 42px; flex: none; display: flex; align-items: center; background: #f5f5f5; border-bottom: 1px solid #cfcfcf; }
.back-btn { width: 33px; height: 33px; margin-left: 4px; border: 1px solid #a8a8a8; border-radius: 50%; background: #fff; display: flex; align-items: center; justify-content: center; }
.tool-fwd { margin-left: 8px; }
.tool-reload { margin-left: 15px; }
.tool-home { margin-left: 16px; }
.urlbar { width: 814px; height: 43px; margin-left: 97px; margin-top: -1px; position: relative; z-index: 2; background: #fff; border: 1px solid #f2784b; border-radius: 4px; display: flex; align-items: center; box-shadow: 0 1px 3px rgba(0,0,0,.1); }
.u-shield { margin-left: 13px; }
.u-sep { width: 1px; height: 22px; background: #d5d5d5; margin-left: 7px; }
.u-lock { margin-left: 6px; }
.u-caret { width: 1px; height: 18px; background: #222; margin-left: 7px; }
.u-text { font-size: 14.4px; color: #333; margin-left: 1px; letter-spacing: -.1px; white-space: nowrap; }
.u-dots { margin-left: auto; font-size: 9px; color: #555; letter-spacing: 1.2px; }
.u-pocket { margin-left: 11px; }
.u-star { margin-left: 12px; margin-right: 14px; }
.t-dl { margin-left: 98px; }
.t-lib { margin-left: 17px; }
.t-side { margin-left: 15px; }
.t-acct { margin-left: 15px; }
.t-sep { width: 1px; height: 28px; background: #d8d8d8; margin-left: 13px; }
.t-menu { margin-left: 14px; }

.viewport { height: 600px; flex: none; display: flex; overflow: hidden; }
.page { width: 1287px; flex: none; display: flex; flex-direction: column; }
.page-track { flex: 1; background: #f0eeec; display: flex; justify-content: flex-end; }
.page-thumb { width: 5px; height: 474px; background: #f08a60; }

/* gitlab nav */
.gl-nav { height: 41px; flex: none; background: #292961; border-bottom: 1px solid #20204f; display: flex; align-items: center; color: #d5d5ef; font-size: 12.3px; font-weight: 600; position: relative; z-index: 1; }
.gl-logo { margin-left: 16px; }
.gl-link { display: flex; align-items: center; white-space: nowrap; }
.chev { margin-left: 5px; }
.gl-projects { margin-left: 26px; }
.gl-groups { margin-left: 21px; }
.gl-activity { margin-left: 19px; }
.gl-miles { margin-left: 21px; }
.gl-snip { margin-left: 18px; }
.gl-chart { margin-left: 21px; }
.gl-plus { margin-left: 292px; }
.gl-plus-chev { margin-left: 7px; }
.gl-search { width: 195px; height: 32px; margin-left: 18px; border-radius: 4px; background: #4a4a7d; color: #c3c3de; font-weight: 400; font-size: 13.8px; display: flex; align-items: center; justify-content: space-between; padding: 0 12px 0 9px; }
.gl-count { display: flex; align-items: center; }
.gl-count-issues { margin-left: 23px; }
.gl-count-todo { margin-left: 24px; }
.badge { height: 13px; min-width: 23px; padding: 0 4px; border-radius: 7px; color: #fff; font-size: 10px; line-height: 13px; text-align: center; font-weight: 700; margin-left: -3px; }
.badge-green { background: #1aaa55; }
.badge-blue { background: #1f78d1; }
.gl-mr { margin-left: 20px; }
.gl-help { margin-left: 17px; }
.gl-help-chev { margin-left: 5px; }
.gl-avatar { margin-left: 21px; }
.gl-av-chev { margin-left: 7px; }

.gl-body { flex: 1; min-height: 0; display: flex; }

/* left sidebar */
.side { width: 220px; flex: none; display: flex; flex-direction: column; background: #fafafa; font-size: 13.7px; }
.side-scroll { height: 511px; flex: none; display: flex; overflow: hidden; }
.side-list { width: 208px; flex: none; color: #707070; }
.side-head { height: 58px; display: flex; align-items: center; padding-left: 11px; }
.side-g { width: 38px; height: 38px; border-radius: 4px; background: #fbeae8; color: #555; font-weight: 700; font-size: 16px; display: flex; align-items: center; justify-content: center; margin-right: 9px; }
.side-name { font-weight: 700; color: #2e2e2e; font-size: 13.2px; }
.side-item { height: 45px; display: flex; align-items: center; padding: 0 16px 0 15px; gap: 8px; }
.side-item span { flex: 1; }
.side-group { background: #f0f0f0; border-left: 4px solid #4b4ba3; height: 201px; }
.side-current { padding-left: 11px; color: #2f2f7a; font-weight: 700; }
.side-sub { height: 37px; line-height: 37px; padding-left: 36px; }
.side-badge { width: 18px; height: 20px; border-radius: 10px; background: #e5e5e5; text-align: center; font-size: 12px; line-height: 20px; font-weight: 600; }
.side-current .side-badge { color: #2f2f7a; }
.side-track { flex: 1; display: flex; justify-content: flex-end; }
.side-thumb { width: 5px; height: 432px; background: #f58f65; margin-right: 0; }
.side-collapse { flex: 1; border-top: 1px solid #e5e5e5; display: flex; align-items: center; gap: 8px; padding: 0 0 0 16px; color: #707070; border-right: 1px solid #e5e5e5; margin-bottom: 0; }

/* main */
.content { width: 777px; flex: none; padding: 0 16px; overflow: hidden; background: #fff; }
.crumbs { height: 46px; display: flex; align-items: center; padding-bottom: 2px; border-bottom: 1px solid #e5e5e5; color: #707070; font-size: 12px; letter-spacing: -.2px; }
.crumbs b { color: #2e2e2e; }
.sepch { font-style: normal; width: 20px; text-align: center; color: #8a8a8a; }
.status-row { height: 55px; display: flex; align-items: center; border-bottom: 1px solid #e5e5e5; }
.open-badge { width: 51px; height: 24px; border-radius: 4px; background: #1aaa55; color: #fff; text-align: center; line-height: 25px; }
.opened { margin-left: 8px; white-space: nowrap; font-size: 13.6px; }
.status-av { margin-left: 6px; }
.author { margin-left: 3px; white-space: nowrap; font-size: 13.4px; }
.btn { display: inline-flex; align-items: center; justify-content: center; height: 33px; border-radius: 4px; background: #fff; white-space: nowrap; font-size: 13.7px; }
.btn-warn { border: 1px solid #fc9403; color: #de7e00; }
.btn-ok { border: 1px solid #1aaa55; color: #168f48; width: 86px; margin-left: 11px; }
.btn-close-top { width: 91px; margin-left: auto; }
.title-row { height: 83px; display: flex; align-items: flex-start; justify-content: space-between; border-bottom: 1px solid #e5e5e5; }
h1 { margin: 15px 0 0; font-size: 26.62px; line-height: 36px; font-weight: 700; color: #2e2e2e; white-space: nowrap; }
.btn-edit { width: 38px; height: 32px; border: 1px solid #e5e5e5; margin-top: 17px; }
.award-row { height: 53px; display: flex; align-items: center; border-bottom: 1px solid #e5e5e5; padding-bottom: 0; gap: 8px; }
.award { height: 36px; border: 1px solid #e5e5e5; border-radius: 4px; display: flex; align-items: center; justify-content: center; gap: 7px; background: #fff; }
.award-up { width: 62px; }
.award-down { width: 63px; }
.award-smile { width: 44px; }
.flip { transform: scale(-1, -1); }
.activity-btn { margin-left: auto; margin-right: 8px; width: 136px; height: 30px; border: 1px solid #e5e5e5; border-radius: 4px; display: flex; align-items: center; justify-content: center; font-size: 12.8px; }
.comment-row { display: flex; padding: 16px 0 0 17px; gap: 17px; }
.comment-av { margin-top: 1px; }
.comment-col { flex: 1; min-width: 0; }
.card { height: 225px; border: 1px solid #e5e5e5; border-radius: 4px; padding: 0 16px; display: flex; flex-direction: column; }
.card-head { height: 41px; flex: none; display: flex; align-items: center; border-bottom: 1px solid #e5e5e5; position: relative; }
.tab-write { width: 53px; height: 41px; line-height: 40px; text-align: center; font-weight: 700; border-bottom: 2px solid #4b4ba3; color: #2e2e2e; margin-bottom: -1px; }
.tab-preview { margin-left: 8px; color: #707070; }
.md-tools { margin-left: auto; display: flex; align-items: center; gap: 26px; padding-right: 3px; color: #666; }
.md-group { display: flex; align-items: center; gap: 14px; }
.md-group svg { width: 16px; }
.md { width: 16px; text-align: center; font-size: 14px; font-weight: 700; color: #666; font-family: "Liberation Serif", serif; margin-top: 3px; }
.md-b { font-family: "Open Sans", sans-serif; }
.md-i { font-style: italic; }
.card-body { flex: 1; padding-top: 13px; font: 13px/16px "Liberation Mono", monospace; color: #9a9a9a; letter-spacing: .02px; }
.card-foot { height: 42px; flex: none; border-top: 1px solid #e5e5e5; display: flex; align-items: center; justify-content: space-between; color: #707070; padding-bottom: 2px; }
.card-foot a { color: #1b69b6; }
.foot-left { white-space: nowrap; font-size: 13.5px; }
.attach { display: flex; align-items: center; gap: 3px; margin-top: 1px; }
.comment-actions { display: flex; gap: 8px; margin-top: 16px; }
.split { display: flex; height: 34px; border: 1px solid #dcdcdc; border-radius: 4px; background: #fafafa; color: #919191; font-size: 13.6px; }
.split-main { width: 83px; text-align: center; line-height: 32px; border-right: 1px solid #e5e5e5; }
.split-drop { width: 33px; display: flex; align-items: center; justify-content: center; }
.mini-caret { border: 4px solid transparent; border-top: 5px solid #8a8a8a; border-bottom: 0; }
.btn-close-bottom { width: 92px; height: 34px; }

/* right sidebar */
.right { width: 290px; flex: none; background: #fafafa; border-left: 1px solid #e5e5e5; padding: 0 19px 0 20px; overflow: hidden; }
.r-sec { border-bottom: 1px solid #e8e8e8; padding: 12px 0 12px; }
.r-due { margin-top: -6px; padding-top: 0; height: 57px; }
.r-tall { padding-bottom: 14px; }
.r-line { height: 22px; display: flex; align-items: center; justify-content: space-between; color: #2e2e2e; }
.r-val { height: 22px; margin-top: 0; display: flex; align-items: center; color: #707070; }
.r-tall .r-val { height: 22px; }
.r-ic svg { margin-right: 10px; }
.r-part { height: 87px; }
.r-av { margin-top: 4px; margin-left: 0; }
.r-notif { height: 70px; padding: 0 0 3px; display: flex; align-items: center; justify-content: space-between; }
.toggle { width: 50px; height: 24px; border-radius: 12px; background: #4a86e8; display: flex; justify-content: flex-end; align-items: center; padding-right: 3px; }
.knob { width: 18px; height: 18px; border-radius: 50%; background: #fff; display: flex; align-items: center; justify-content: center; }
.r-ref { height: 59px; padding: 0 0 6px; display: flex; align-items: center; justify-content: space-between; white-space: nowrap; }
.r-ref svg { margin-right: 6px; margin-top: -3px; }
.move-btn { height: 34px; margin-top: 16px; background: #fff; border: 1px solid #e5e5e5; border-radius: 4px; text-align: center; line-height: 34px; }

/* find bar */
.findbar { flex: 1; min-height: 0; display: flex; align-items: center; background: #f1f0ee; border-top: 1px solid #c8c6c3; color: #3a3a3a; font-size: 14px; }
.find-input { width: 205px; height: 24px; margin-left: 8px; border: 1px solid #c8c6c3; border-radius: 3px 0 0 3px; background: #fff; padding-left: 6px; line-height: 22px; color: #2a4a6a; letter-spacing: .15px; }
.find-btn { width: 27px; height: 24px; border: 1px solid #c8c6c3; border-left: 0; background: #f5f4f2; display: flex; align-items: center; justify-content: center; }
.find-btn-2 { border-radius: 0 3px 3px 0; }
.find-opt { white-space: nowrap; }
.find-hl { margin-left: 11px; letter-spacing: .42px; }
.find-case { margin-left: 17px; }
.find-dia { margin-left: 17px; letter-spacing: .18px; }
.find-word { margin-left: 17px; letter-spacing: .08px; }
.find-count { margin-left: 18px; color: #8a8a8a; white-space: nowrap; letter-spacing: .06px; }
.find-x { margin-left: auto; margin-right: 13px; }
```
